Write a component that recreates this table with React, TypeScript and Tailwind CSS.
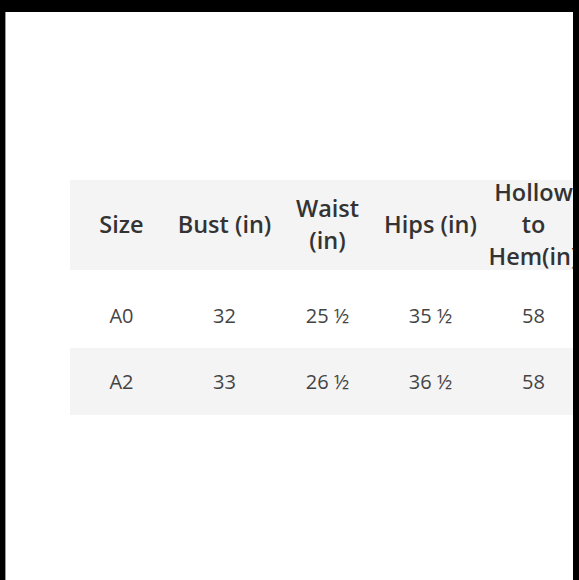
const headers = ["Size", "Bust (in)", "Waist (in)", "Hips (in)", "Hollow to Hem(in)"];

const rows = [
  { cells: ["A0", "32", "25 ½", "35 ½", "58"], cls: "bg-white h-[78px] pt-[30px]" },
  { cells: ["A2", "33", "26 ½", "36 ½", "58"], cls: "bg-[#f4f4f4] h-[67px] pt-[18px]" },
];

export default function App() {
  return (
    <div className="w-[579px] h-[580px] bg-black pt-[12px] pl-[5px] pr-[6px]">
      <div
        className="h-full bg-white overflow-hidden border-l border-[#9a9a9a] pt-[168px] pl-[64px]"
        style={{ fontFamily: '"Open Sans", "Noto Sans", sans-serif' }}
      >
        <div className="w-[515px] text-[20px] leading-[32px] text-[#333]">
          <div className="grid grid-cols-[repeat(5,103px)] h-[90px] bg-[#f4f4f4] font-semibold text-[23.5px] leading-[32px]">
            {headers.map((h) => (
              <div key={h} className="flex items-center justify-center text-center px-1 -mt-[4px]">
                {h}
              </div>
            ))}
          </div>
          {rows.map((r) => (
            <div key={r.cells[0]} className={`grid grid-cols-[repeat(5,103px)] ${r.cls}`}>
              {r.cells.map((c, i) => (
                <div key={i} className="text-center text-[#444]">
                  {c}
                </div>
              ))}
            </div>
          ))}
        </div>
      </div>
    </div>
  );
}
